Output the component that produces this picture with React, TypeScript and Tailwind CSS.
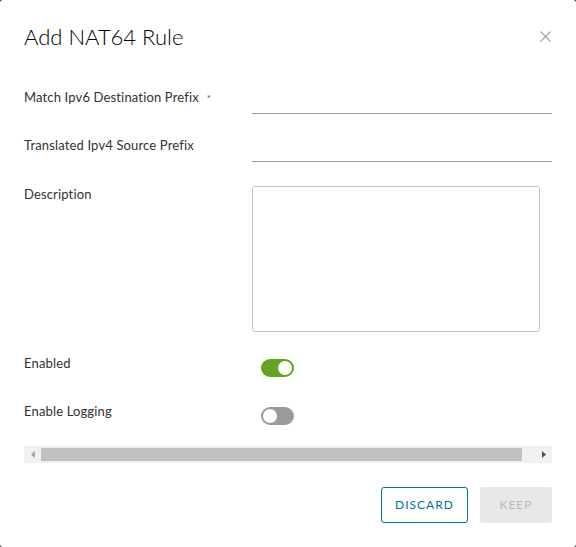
import React from 'react';

function Toggle({ on }: { on: boolean }) {
  return (
    <span
      className={`relative block h-[18px] w-[33px] rounded-full ${on ? 'bg-[#62a420]' : 'bg-[#9a9a9a]'}`}
    >
      <span
        className={`absolute top-[2px] h-[14px] w-[14px] rounded-full bg-white ${on ? 'left-[17px]' : 'left-[2px]'}`}
      />
    </span>
  );
}

export default function App() {
  const font = { fontFamily: 'Lato, "Open Sans", "Noto Sans", sans-serif' };
  return (
    <div className="h-[547px] w-[576px] bg-[#313131]" style={font}>
      <div className="flex h-full w-full flex-col rounded-[3px] bg-white">
        {/* header */}
        <div className="flex h-[72px] items-center justify-between pl-[24px] pr-[25px] pt-[1px]">
          <h2 className="text-[22px] font-light leading-none text-[#000]">Add NAT64 Rule</h2>
          <svg width="11" height="11" viewBox="0 0 11 11" className="text-[#a3a3a3]">
            <path d="M0.5 0.5 L10.5 10.5 M10.5 0.5 L0.5 10.5" stroke="currentColor" strokeWidth="1.1" />
          </svg>
        </div>

        {/* form */}
        <div className="mt-[10px] flex flex-col pl-[24px] pr-[24px] text-[13px] leading-[16px] tracking-[0.15px] text-[#313131]">
          <div className="flex h-[32px]">
            <label className="w-[228px] pt-[7px]">
              Match Ipv6 Destination Prefix<span className="ml-[8px] text-[10px] text-[#c92100]">*</span>
            </label>
            <div className="flex-1 border-b border-[#9a9a9a]" />
          </div>
          <div className="mt-[16px] flex h-[32px]">
            <label className="w-[228px] pt-[7px]">Translated Ipv4 Source Prefix</label>
            <div className="flex-1 border-b border-[#9a9a9a]" />
          </div>
          <div className="mt-[24px] flex">
            <label className="w-[228px] pt-0">Description</label>
            <div className="h-[146px] w-[288px] rounded-[3px] border border-[#c4c4c4]" />
          </div>
          <div className="mt-[20px] flex h-[24px]">
            <label className="w-[237px] pt-[3px]">Enabled</label>
            <div className="pt-[7px]">
              <Toggle on />
            </div>
          </div>
          <div className="mt-[24px] flex h-[24px]">
            <label className="w-[237px] pt-[3px]">Enable Logging</label>
            <div className="pt-[7px]">
              <Toggle on={false} />
            </div>
          </div>

          {/* horizontal scrollbar */}
          <div className="mt-[22px] flex h-[17px] items-center bg-[#f1f1f1]">
            <div className="flex w-[17px] justify-center">
              <svg width="4" height="7" viewBox="0 0 4 7">
                <path d="M4 0 L0 3.5 L4 7 Z" fill="#a3a3a3" />
              </svg>
            </div>
            <div className="h-[13px] w-[481px] bg-[#c1c1c1]" />
            <div className="flex flex-1 justify-end">
              <div className="flex w-[17px] justify-center">
                <svg width="4" height="7" viewBox="0 0 4 7">
                  <path d="M0 0 L4 3.5 L0 7 Z" fill="#505050" />
                </svg>
              </div>
            </div>
          </div>
        </div>

        {/* footer */}
        <div className="mt-[24px] flex justify-end gap-[12px] pr-[24px]">
          <button className="h-[36px] w-[87px] rounded-[3px] border border-[#0072a3] text-[12px] tracking-[1px] text-[#0072a3]">
            DISCARD
          </button>
          <button className="h-[36px] w-[72px] rounded-[3px] bg-[#e8e8e8] text-[12px] tracking-[1px] text-[#b8b8b8]">
            KEEP
          </button>
        </div>
      </div>
    </div>
  );
}
